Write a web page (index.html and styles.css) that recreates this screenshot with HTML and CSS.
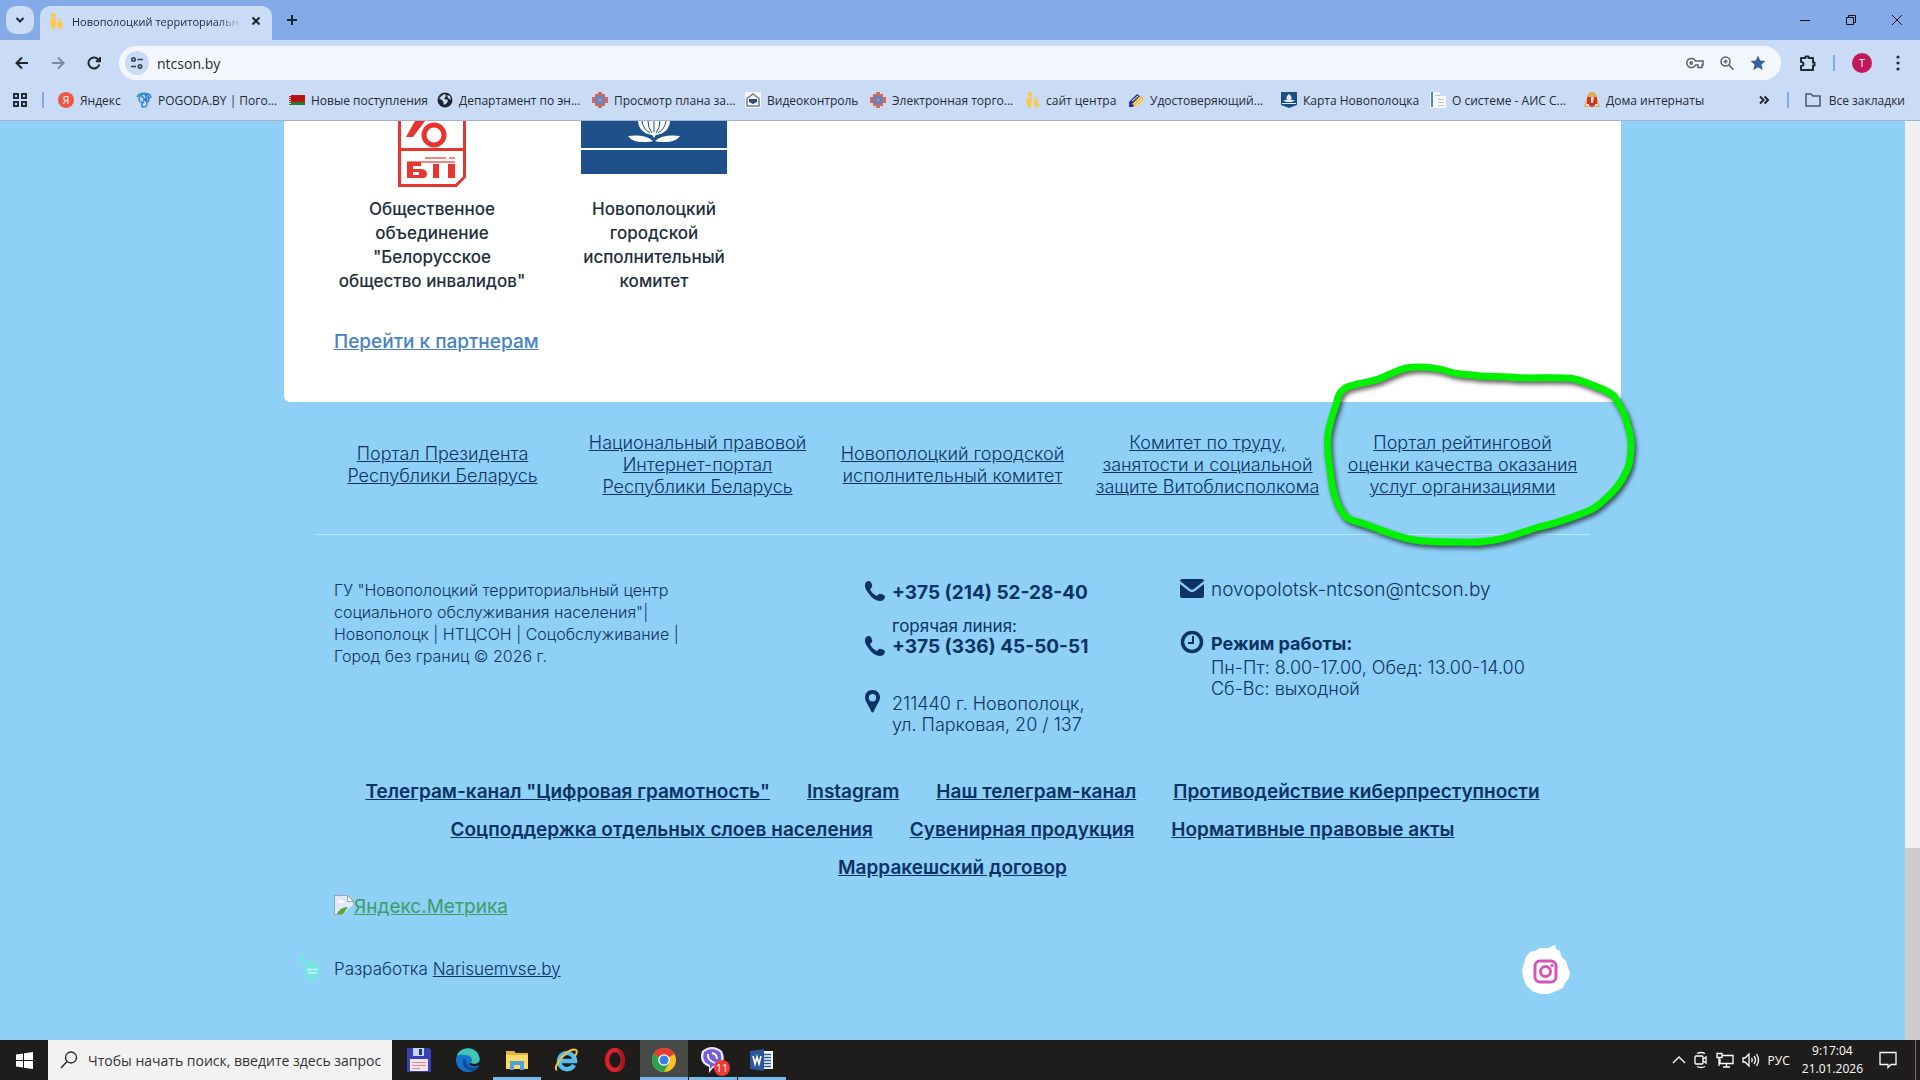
FILE: index.html
```html
<!DOCTYPE html>
<html lang="ru">
<head>
<meta charset="utf-8">
<title>Новополоцкий территориальный центр</title>
<link rel="stylesheet" href="styles.css">
</head>
<body>
<header class="browser">
  <div class="tabstrip">
    <button class="tab-menu" aria-label="Поиск вкладок"><svg width="10" height="8" viewBox="0 0 10 8"><path d="M1.5 2 5 5.500 8.500 2" class="ln"/></svg></button>
    <div class="tab">
      <svg width="14" height="16" viewBox="0 0 14 16"><g fill="#fbc94a"><circle cx="4.500" cy="2.200" r="2.200"/><path d="M2 5h5v5l-1 6H3L1 10z"/><circle cx="10.500" cy="7" r="1.600"/><path d="M8 9h5l1 4-3 3-2-1z"/></g></svg>
      <span class="tab-title">Новополоцкий территориальн</span>
      <button class="plain" aria-label="Закрыть"><svg width="10" height="10" viewBox="0 0 10 10"><path d="m1.500 1.500 7 7m0-7-7 7" class="ln"/></svg></button>
    </div>
    <button class="plain newtab" aria-label="Новая вкладка"><svg width="12" height="12" viewBox="0 0 12 12"><path d="M6 1v10M1 6h10" class="ln"/></svg></button>
    <div class="winctl">
      <button class="plain" aria-label="Свернуть"><svg width="12" height="12" viewBox="0 0 12 12"><path d="M1 6.500h10" stroke="#111"/></svg></button>
      <button class="plain" aria-label="Окно"><svg width="12" height="12" viewBox="0 0 12 12" fill="none" stroke="#111"><path d="M1.500 3.500h7v7h-7zM3.500 3.500v-2h7v7h-2"/></svg></button>
      <button class="plain" aria-label="Закрыть окно"><svg width="12" height="12" viewBox="0 0 12 12"><path d="m1 1 10 10M11 1 1 11" stroke="#111"/></svg></button>
    </div>
  </div>
  <div class="toolbar">
    <button class="plain nav" aria-label="Назад"><svg width="14" height="14" viewBox="0 0 14 14"><path d="M13 7H2m5-5.500L1.500 7 7 12.500" class="ln"/></svg></button>
    <button class="plain nav dim" aria-label="Вперёд"><svg width="14" height="14" viewBox="0 0 14 14"><path d="M1 7h11M7 1.500 12.500 7 7 12.500" class="ln"/></svg></button>
    <button class="plain nav" aria-label="Обновить"><svg width="14" height="14" viewBox="0 0 14 14"><path d="M12.300 8.500A5.500 5.500 0 1 1 11 3.200L13 5M13 1v4.200H8.800" class="ln"/></svg></button>
    <div class="omnibox">
      <span class="site"><svg width="14" height="14" viewBox="0 0 14 14" fill="none" stroke="#333c4a" stroke-width="1.600"><circle cx="3.500" cy="3.500" r="1.700"/><path d="M7.500 3.500H13M1 10.500h5"/><circle cx="10" cy="10.500" r="1.700"/></svg></span>
      <input class="url" aria-label="Адрес" value="ntcson.by">
      <svg width="18" height="12" viewBox="0 0 18 12" fill="none" stroke="#5a616c" stroke-width="1.500"><path d="M9.500 4A4.600 4.600 0 1 0 9.500 8H12v2.500h4V8h1V4z"/><circle cx="5.200" cy="6" r="1.200"/></svg>
      <svg width="14" height="15" viewBox="0 0 14 15" fill="none" stroke="#5a616c" stroke-width="1.500"><circle cx="5.500" cy="5.500" r="4.500"/><path d="m8.800 8.800 4.500 5M3.500 5.500h4M5.500 3.500v4"/></svg>
      <svg width="16" height="16" viewBox="0 0 16 16"><path fill="#35639f" d="m8 .5 2.200 5 5.300.5-4 3.600 1.200 5.400L8 12.200 3.300 15l1.200-5.400-4-3.600 5.300-.5z"/></svg>
    </div>
    <button class="plain" aria-label="Расширения"><svg width="18" height="18" viewBox="0 0 18 18" fill="none" stroke="#222b38" stroke-width="2" stroke-linejoin="round"><path d="M2 4h4.500V2.500h3V4H14v4.500h1.500v3H14V16H2v-4q2.500 0 2.500-2T2 8z"/></svg></button>
    <span class="sep"></span>
    <span class="avatar">T</span>
    <button class="plain" aria-label="Меню"><svg width="4" height="16" viewBox="0 0 4 16" fill="#222b38"><circle cx="2" cy="2" r="1.600"/><circle cx="2" cy="8" r="1.600"/><circle cx="2" cy="14" r="1.600"/></svg></button>
  </div>
  <nav class="bookmarks">
    <button class="plain apps" aria-label="Группы"><svg width="16" height="16" viewBox="0 0 16 16" fill="none" stroke="#222b38" stroke-width="2"><path d="M2 2h4v4H2zM10 2h4v4h-4zM2 10h4v4H2zM10 10h4v4h-4z"/></svg></button>
    <span class="sep"></span>
    <div class="marks">
      <a href="#"><span class="ya">Я</span>Яндекс</a>
      <a href="#"><svg width="16" height="16" viewBox="0 0 16 16" fill="none" stroke="#2f86cf" stroke-width="1.500"><path d="M3 8a5 5 0 1 1 9 2M1 5c3-5 12-5 14 0-3 2-6 1-8 4m-3-7 7 8M9 1l2 9m-3 0c-3 1-3 5 0 5s4-3 2-6M3 8l3 3"/></svg>POGODA.BY | Пого...</a>
      <a href="#"><svg width="16" height="10" viewBox="0 0 16 10"><path fill="#b5130f" d="M0 0h16v7H0z"/><path fill="#287a2d" d="M0 7h16v3H0z"/><path stroke="#f2dada" stroke-width="2" stroke-dasharray="1 1" d="M1 0v10"/></svg>Новые поступления</a>
      <a href="#"><svg width="16" height="16" viewBox="0 0 16 16"><circle cx="8" cy="8" r="7.500" fill="#202630"/><path fill="#cadbf5" d="M2 6c3-1 2-3 6-4l1 2-2 3 4 1-1 3-3 2-1-4zM10 3l3 1 1 4-3-2z"/></svg>Департамент по эн...</a>
      <a href="#"><svg width="16" height="16" viewBox="0 0 16 16"><use href="#flower"/></svg>Просмотр плана за...</a>
      <a href="#"><svg width="16" height="16" viewBox="0 0 16 16"><path fill="#f3f6fb" d="M0 0h16v16H0z"/><path fill="none" stroke="#707e91" stroke-width="1.500" d="M2 6.500 8 2l6 4.500V14H2z"/><path fill="#334b70" d="M4 7h8v3l-4 2-4-2z"/></svg>Видеоконтроль</a>
      <a href="#"><svg width="16" height="16" viewBox="0 0 16 16"><g id="flower"><path fill="#d5685b" d="M6 0h4v2h3v3h3v6h-3v3h-3v2H6v-2H3v-3H0V5h3V2h3z"/><circle cx="8" cy="8" r="4.800" fill="#5d86c4"/><circle cx="8" cy="8" r="1.800" fill="#cf8585"/></g></svg>Электронная торго...</a>
      <a href="#"><svg width="16" height="16" viewBox="0 0 16 16"><g fill="#fbc94a"><circle cx="6" cy="2.200" r="2.200"/><path d="M4 5h4v5l-1 6H5L2 10z"/><circle cx="12" cy="7" r="1.600"/><path d="M10 9h4l1 4-2 3-2-1z"/></g></svg>сайт центра</a>
      <a href="#"><svg width="16" height="16" viewBox="0 0 16 16"><path fill="#26348d" d="m1 10 8-8 4 3-8 10H1z"/><path fill="#f4c24a" d="m4 12 9-9 3 5-8 7z"/><path stroke="#fff" d="m4 9 6-5M8 13l6-6"/></svg>Удостоверяющий...</a>
      <a href="#"><svg width="16" height="16" viewBox="0 0 16 16"><path fill="#1d4f86" d="M0 0h16v13l-8 3-8-3z"/><path fill="#dfe9f5" d="M8 2q4 3 2 6h4l-3 2H5L2 8h4Q4 5 8 2zM1 11h14v1H1z"/></svg>Карта Новополоцка</a>
      <a href="#"><svg width="16" height="16" viewBox="0 0 16 16"><path fill="#f7f9fc" d="M0 0h10v16H0zM6 4h10v12H6z"/><path fill="#3f8fc0" d="M1 0h2v15H1z"/><path stroke="#b8c4cf" d="M5 3.500h5M8 7.500h6M8 10.500h6M8 13.500h6"/></svg>О системе - АИС С...</a>
      <a href="#"><svg width="16" height="16" viewBox="0 0 16 16"><path fill="#d9b04d" d="M4 2l2-2h4l2 2 1 4 3 9H0l3-9z"/><path fill="#d3312e" d="M3 5h10v7l-5 3-5-3z"/><path fill="#f2dfd0" d="M7 5h3l-1 6H7zM2 12h3v2H2zM11 12h3v2h-3z"/></svg>Дома интернаты</a>
    </div>
    <button class="plain" aria-label="Ещё"><svg width="10" height="10" viewBox="0 0 10 10"><path d="m1 1.500 3.500 3.500L1 8.500m4.500-7L9 5 5.500 8.500" class="ln"/></svg></button>
    <span class="sep"></span>
    <a class="all" href="#"><svg width="16" height="14" viewBox="0 0 16 14" fill="none" stroke="#4c5666" stroke-width="1.500"><path d="M1 2.500V13h14V3H8L6 1H1z"/></svg>Все закладки</a>
  </nav>
</header>

<div class="viewport">
  <main class="page">
    <section class="card">
      <div class="partners">
        <figure>
          <svg width="70" height="66" viewBox="0 0 70 66"><g fill="none" stroke="#e8352f"><path stroke-width="3" d="M2.500 0v64.500h56.500l8.500-8.500V0"/><path stroke-width="3" d="M2 28.500h66"/><circle cx="37" cy="14" r="10" stroke-width="5"/></g><g fill="#e8352f"><path d="m9 16 9-16h10L16 16z"/><path d="M10 41h14v4h-8v3h7q7 0 7 5t-7 4H10zM16 51h6v3h-6zM36 43h6v14h-6zM51 43h7v14h-7z" fill-rule="evenodd"/><path opacity=".6" d="M28 36h21v2H28zm24 0h6v2h-6zM10 40h48v2H10z"/></g></svg>
          <figcaption>Общественное объединение "Белорусское общество инвалидов"</figcaption>
        </figure>
        <figure>
          <svg width="146" height="66" viewBox="0 0 146 66"><path fill="#1e5089" d="M0 0h146v27H0zM0 29h146v24H0z"/><path fill="#fff" d="M57 0h32q-1 12-14 14-1 1-2 3-1-2-2-3Q58 12 57 0zM47 15q17-2 25 5-2 1-10 1-11 0-15-6zm52 0q-17-2-25 5 2 1 10 1 11 0 15-6z"/><path fill="none" stroke="#1e5089" d="M61 0q1 8 8 12M67 0q0 7 4 12M79 0q0 7-4 12M85 0q-1 8-8 12M73 0v11"/></svg>
          <figcaption>Новополоцкий городской исполнительный комитет</figcaption>
        </figure>
      </div>
      <a class="more" href="#">Перейти к партнерам</a>
    </section>

    <footer class="footer">
      <ul class="portals">
        <li><a href="#">Портал Президента<br>Республики Беларусь</a></li>
        <li><a href="#">Национальный правовой<br>Интернет-портал<br>Республики Беларусь</a></li>
        <li><a href="#">Новополоцкий городской<br>исполнительный комитет</a></li>
        <li><a href="#">Комитет по труду,<br>занятости и социальной<br>защите Витоблисполкома</a></li>
        <li><a href="#">Портал рейтинговой<br>оценки качества оказания<br>услуг организациями</a>
          <svg class="marker" width="325" height="200" viewBox="1320 360 325 200"><path fill="none" stroke="#00f200" stroke-width="7" stroke-linejoin="round" stroke-linecap="round" d="M1336 405C1338 397 1338 393 1345 388C1354 383 1370 383 1381 378C1390 374 1400 369 1407 368C1418 366 1437 367 1450 372C1459 375 1470 374 1479 376L1509 377C1530 379 1545 377 1565 378C1573 378 1580 380 1587 383C1598 387 1609 391 1614 396C1618 404 1625 412 1627 423C1630 433 1632 441 1631 448C1630 460 1630 464 1626 472C1621 483 1614 492 1604 500C1597 507 1590 511 1583 513C1568 519 1553 524 1539 527C1521 532 1505 540 1487 541C1477 543 1467 542 1457 542C1439 542 1423 542 1409 539C1395 536 1383 531 1370 526C1361 522 1350 521 1346 517C1341 511 1338 506 1336 500C1331 487 1331 475 1329 463C1327 450 1327 444 1328 433C1330 424 1332 415 1336 405Z"/></svg>
        </li>
      </ul>
      <div class="info">
        <p class="about">ГУ "Новополоцкий территориальный центр<br>социального обслуживания населения"|<br>Новополоцк | НТЦСОН | Соцобслуживание |<br>Город без границ © 2026 г.</p>
        <div class="contacts">
          <svg class="ph" viewBox="0 0 20 20"><use href="#phone"/></svg>
          <a class="tel" href="tel:+375214522840">+375 (214) 52-28-40</a>
          <svg class="ph low" viewBox="0 0 20 20"><path id="phone" fill="#0c3364" d="M4 0q2 0 3 4 1 2-2 4 2 5 7 7 2-3 4-2 4 1 4 3-1 4-5 4Q9 20 4 13-1 7 0 3 1 0 4 0z"/></svg>
          <div class="hot"><span>горячая линия:</span><a class="tel" href="tel:+375336455051">+375 (336) 45-50-51</a></div>
          <svg class="ph pin" viewBox="0 0 16 23"><path fill="#0c3364" fill-rule="evenodd" d="M7.500 0C12 0 15 3 15 7.500 15 11 11 16 9 21q-1.500 3-3 0C4 16 0 11 0 7.500 0 3 3 0 7.500 0zm0 4a3.700 3.700 0 1 0 0 7.400 3.700 3.700 0 0 0 0-7.400z"/></svg>
          <address>211440 г. Новополоцк,<br>ул. Парковая, 20 / 137</address>
        </div>
        <div class="schedule">
          <svg width="24" height="20" viewBox="0 0 24 20"><path fill="#0c3364" d="M2 0h20q2 0 2 2L14 10q-2 1.500-4 0L0 2q0-2 2-2zM0 5l9 7q3 2 6 0l9-7v12q0 2-2 2H2q-2 0-2-2z"/></svg>
          <a class="mail" href="mailto:novopolotsk-ntcson@ntcson.by">novopolotsk-ntcson@ntcson.by</a>
          <svg width="24" height="24" viewBox="0 0 24 24" fill="none" stroke="#0c3364"><circle cx="12" cy="12" r="9.500" stroke-width="3.500"/><path stroke-width="2" d="M13 6v7H8"/></svg>
          <p><strong>Режим работы:</strong>Пн-Пт: 8.00-17.00, Обед: 13.00-14.00<br>Сб-Вс: выходной</p>
        </div>
      </div>
      <nav class="links">
        <div><a href="#">Телеграм-канал "Цифровая грамотность"</a><a href="#">Instagram</a><a href="#">Наш телеграм-канал</a><a href="#">Противодействие киберпреступности</a></div>
        <div><a href="#">Соцподдержка отдельных слоев населения</a><a href="#">Сувенирная продукция</a><a href="#">Нормативные правовые акты</a></div>
        <div><a href="#">Марракешский договор</a></div>
      </nav>
      <a class="metrika" href="#"><svg width="20" height="20" viewBox="0 0 20 20"><path fill="#dde8f8" stroke="#9da3a8" d="M.5.500h13l6 6v13H.5z"/><path fill="#fff" d="M3 8q1-4 4-3 3 0 3 3z"/><path fill="#54a63c" d="M3 19q3-7 11-7l-5 7z"/><path fill="#8ed0f6" d="m20 9-12 11h12z"/><path fill="#fff" stroke="#9da3a8" d="M13.500.500v6h6z"/></svg>Яндекс.Метрика</a>
      <div class="credits">
        <svg class="nv" width="22" height="30" viewBox="0 0 22 30"><g fill="#78e3e2"><ellipse cx="13" cy="17" rx="8" ry="10"/><circle cx="3" cy="5" r="3"/><path d="m3 3 8 6-3 4z"/></g><path stroke="#b5f2f2" stroke-width="2" d="M8 15.500h11M9 19h9"/></svg>
        <span>Разработка <a href="#">Narisuemvse.by</a></span>
        <a class="insta" href="#" aria-label="Instagram"><svg width="48" height="50" viewBox="0 0 48 50"><path fill="#fff" d="m4 13 4-5 5-1 5-3 8 0 7-3 1 4 4 2 1 5 5 5 2 7 2 4-1 6-4 5-2 5-7 3-7 3-9 0-8-3-6-6-3-8-1-7 2-7z"/><g fill="none" stroke="#d355b5" stroke-width="3"><rect x="13" y="17" width="21" height="21" rx="5"/><circle cx="23.500" cy="27.500" r="5"/></g><circle cx="30" cy="21.500" r="1.600" fill="#d355b5"/></svg></a>
      </div>
    </footer>
  </main>
  <div class="scroll"><span class="thumb"></span></div>
</div>

<div class="taskbar">
  <button class="plain start" aria-label="Пуск"><svg width="17" height="17" viewBox="0 0 17 17" fill="#fff"><path d="M0 2.500 7 1.500V8H0zM8 1.300 17 0v8H8zM0 9h7v6.500l-7-1zM8 9h9v8l-9-1.300z"/></svg></button>
  <label class="search"><svg width="18" height="18" viewBox="0 0 18 18" fill="none" stroke="#222" stroke-width="1.300"><circle cx="11" cy="6.500" r="5.500"/><path d="M7 10.500 1 17"/></svg><input aria-label="Поиск" placeholder="Чтобы начать поиск, введите здесь запрос"></label>
  <div class="apps-row">
    <button aria-label="Total Commander"><svg width="24" height="24" viewBox="0 0 24 24"><path fill="#3541b6" d="M0 0h22l2 2v22H0z"/><path fill="#c9d4ea" d="M6 0h11v8H6z"/><path fill="#27337f" d="M12 1h3v6h-3z"/><path fill="#f8e3e8" d="M3 11h18v12H3z"/><path stroke="#d48f9d" d="M5 14.500h14M5 17.500h14M5 20.500h8"/></svg></button>
    <button aria-label="Edge"><svg width="24" height="24" viewBox="0 0 24 24"><circle cx="12" cy="12" r="12" fill="#1473c8"/><path fill="#3fc6b0" d="M1 8C3-1 20-3 23 9c2 6-4 8-8 6 3-5-2-8-6-8-4-.5-7 0-8 1z"/><path fill="#0d4c98" d="M8 10c-3 6 1 13 9 13 4-1 5-3 6-5-6 3-13 1-13-5z"/><path fill="#1e1e1c" d="M15 15c3 2 7 1 9-2v3c-3 3-8 3-11 0z"/></svg></button>
    <button class="open" aria-label="Проводник"><svg width="22" height="20" viewBox="0 0 22 20"><path fill="#e8b53c" d="M0 1h8l2 2h12v16H0z"/><path fill="#ffd869" d="M0 5h22v14H0z"/><path fill="#4aa5d8" d="M4 11h14v9h-4v-5H8v5H4z"/></svg></button>
    <button aria-label="Internet Explorer"><svg width="24" height="24" viewBox="0 0 24 24" fill="none"><path stroke="#55bdee" stroke-width="4.500" d="M20 17a8 8 0 1 1 1-4H6"/><path stroke="#f2c53d" stroke-width="2" d="M3 22C-3 20 15-2 22 2q2 2-1 6"/></svg></button>
    <button aria-label="Opera"><svg width="24" height="24" viewBox="0 0 24 24"><ellipse cx="12" cy="12" rx="8" ry="10" fill="none" stroke="#d9202b" stroke-width="4.500"/><path fill="#8f0f18" d="M14 1c9 2 13 17 0 22 6-6 6-16 0-22z" opacity=".6"/></svg></button>
    <button class="open active" aria-label="Chrome"><svg width="24" height="24" viewBox="0 0 24 24"><circle cx="12" cy="12" r="12" fill="#fcc31e"/><path fill="#e33b2e" d="M12 12 1.600 6A12 12 0 0 1 22.400 6z"/><path fill="#2da24c" d="M12 12 1.600 6A12 12 0 0 0 12 24l5-9z"/><circle cx="12" cy="12" r="5.800" fill="#fff"/><circle cx="12" cy="12" r="4.500" fill="#3b7ded"/></svg></button>
    <button class="open" aria-label="Viber"><svg width="26" height="26" viewBox="0 0 26 26"><path fill="#eee8fb" d="M2 4q10-8 20 0 4 9-1 15l-8 2-4 5v-6Q-2 16 2 4z"/><path fill="#7460dc" d="M4 5q8-6 16 0 3 7-1 12l-6 2-3 3v-4Q1 15 4 5z"/><path fill="none" stroke="#fff" stroke-width="1.800" d="M8 7q-1 6 7 9M12 6q5 1 5 6"/></svg><span class="badge">11</span></button>
    <button class="open" aria-label="Word"><svg width="24" height="22" viewBox="0 0 24 22"><path fill="#fff" d="M12 2h11v18H12z"/><path stroke="#2b579a" stroke-width="1.500" d="M13 5.500h8M13 8.500h8M13 11.500h8M13 14.500h8M13 17.500h8"/><path fill="#2b579a" d="m0 2 14-2v22L0 20z"/><path fill="none" stroke="#fff" stroke-width="1.600" d="m3 7 2 8 2-7 2 7 2-8"/></svg></button>
  </div>
  <div class="tray">
    <svg width="14" height="8" viewBox="0 0 14 8"><path d="m1 7 6-6 6 6"/></svg>
    <svg width="14" height="18" viewBox="0 0 14 18"><rect x="1" y="5" width="8" height="8" rx="1"/><path d="m9 8 3-2v6l-3-2M3 2.500q4-2 8 0M3 15.500q4 2 8 0"/></svg>
    <svg width="18" height="16" viewBox="0 0 18 16"><path d="M6 3.500h11v8H4V7M1 1.500h5v4H1zM3 5v9M10.500 12v3M7 15h7"/></svg>
    <svg width="18" height="14" viewBox="0 0 18 14"><path d="M1 5h2l4-4v12L3 9H1zM9.500 5q1.500 2 0 4M12 3q3 4 0 8M14.500 1q4 6 0 12"/></svg>
    <span class="lang">РУС</span>
    <span class="clock">9:17:04<br>21.01.2026</span>
    <svg width="18" height="18" viewBox="0 0 18 18"><path d="M1 1.500h16v12h-5l-3 3v-3H1z"/></svg>
    <span class="edge"></span>
  </div>
</div>
</body>
</html>
```
FILE: styles.css
```css
* { box-sizing: border-box; }
body { margin: 0; min-height: 100vh; display: flex; flex-direction: column; font-family: "Open Sans", sans-serif; font-size: 12px; color: #222b38; }
svg { flex: none; display: block; }
.ln { fill: none; stroke: #1f2733; stroke-width: 2; }
.plain { border: 0; background: none; padding: 0; display: flex; align-items: center; justify-content: center; }
a { color: inherit; }

.browser { background: #cadbf5; border-bottom: 1px solid #9eb2d0; }
.tabstrip { height: 40px; background: #84aae8; display: flex; align-items: flex-end; padding-left: 6px; }
.tab-menu { width: 28px; height: 28px; margin: 0 6px 6px 0; border: 0; border-radius: 10px; background: #cadbf5; display: flex; align-items: center; justify-content: center; }
.tab { width: 232px; height: 34px; border-radius: 10px 10px 0 0; background: #cadbf5; display: flex; align-items: center; gap: 9px; padding: 0 11px 4px 9px; }
.tab-title { flex: 1; white-space: nowrap; font-size: 11px; mask-image: linear-gradient(90deg, #000 85%, transparent); }
.newtab { margin: 0 0 14px 14px; }
.winctl { margin-left: auto; display: flex; gap: 34px; padding: 0 17px 14px 0; }
.toolbar { height: 46px; display: flex; align-items: center; padding: 0 20px 0 15px; gap: 17px; }
.nav { width: 14px; margin-right: 5px; }
.dim { opacity: .45; }
.omnibox { flex: 1; height: 34px; border-radius: 17px; background: #f3f7fd; display: flex; align-items: center; gap: 16px; padding: 0 15px 0 6px; }
.nav + .omnibox { margin-left: -4px; }
.site { width: 24px; height: 24px; border-radius: 50%; background: #cadbf5; display: flex; align-items: center; justify-content: center; }
.url { flex: 1; border: 0; background: none; padding: 0; margin-left: -8px; font: 14px "Open Sans", sans-serif; color: #222b38; }
.omnibox + .plain { margin: 0 -1px 0 1px; }
.sep { width: 2px; height: 16px; background: #84aae8; }
.avatar { width: 20px; height: 20px; margin-right: 7px; border-radius: 50%; background: #c2185b; color: #fff; font-size: 11px; line-height: 20px; text-align: center; }
.bookmarks { height: 34px; display: flex; align-items: center; padding: 0 15px 6px 12px; }
.bookmarks a { display: flex; align-items: center; gap: 6px; text-decoration: none; white-space: nowrap; }
.apps { margin-right: 14px; }
.marks { flex: 1; display: grid; grid-template-columns: 78px 153px 148px 155px 153px 125px 154px 104px 153px 149px 154px auto; padding-left: 14px; }
.ya { width: 16px; height: 16px; border-radius: 50%; background: #ef5647; color: #fff; font-size: 11px; line-height: 16px; text-align: center; }
.bookmarks .all { gap: 8px; margin-left: 16px; }
.marks + .plain { margin-right: 18px; }

.viewport { flex: 1; display: flex; background: #8ed0f6; }
.page { flex: 1; max-width: 1337px; margin: 0 auto; font-family: Inter, sans-serif; color: #0c3364; }
.scroll { width: 15px; background: #f0f0f0; display: flex; align-items: flex-end; }
.thumb { width: 15px; height: 192px; background: #cdcdcd; }
.card { background: #fff; border-radius: 0 0 6px 6px; padding: 0 50px 48px; color: #212e3c; }
.partners { display: flex; gap: 26px; }
figure { margin: 0; width: 196px; display: flex; flex-direction: column; align-items: center; gap: 10px; }
figcaption { font-size: 17px; line-height: 24px; font-weight: 500; text-align: center; }
.more { display: inline-block; margin-top: 37px; font-size: 19px; line-height: 24px; font-weight: 500; color: #4682c6; }
.footer { padding: 30px 31px 0; }
.portals { list-style: none; margin: 0; padding: 0 0 36px; display: grid; grid-template-columns: repeat(5, 1fr); border-bottom: 1px solid #b9e6fa; }
.portals li { position: relative; display: flex; align-items: center; justify-content: center; text-align: center; white-space: nowrap; font-size: 18px; line-height: 22px; font-weight: 300; }
.marker { position: absolute; left: -15px; top: -72px; filter: drop-shadow(2px 3px 2px rgba(0, 0, 0, .6)); pointer-events: none; }
.info { display: grid; grid-template-columns: 531px 315px 1fr; padding: 44px 0 0 19px; }
.about { margin: 0; font-size: 16px; line-height: 22px; font-weight: 300; }
.contacts, .schedule { display: grid; grid-template-columns: 27px 1fr; align-content: start; }
.schedule { grid-template-columns: 31px 1fr; white-space: nowrap; }
.ph { width: 20px; height: 20px; margin-top: 2px; }
.tel { font-size: 19px; line-height: 28px; font-weight: 700; text-decoration: none; white-space: nowrap; }
.hot { display: flex; flex-direction: column; margin: 9px 0 32px; font-size: 17px; line-height: 20px; }
.hot .tel { line-height: 22px; }
.low { margin-top: 29px; }
.pin { width: 16px; height: 23px; margin-top: 0; }
address { font-style: normal; font-size: 18px; line-height: 21px; font-weight: 300; white-space: nowrap; padding-top: 3px; }
.mail { font-size: 19px; line-height: 22px; font-weight: 300; text-decoration: none; margin-bottom: 29px; }
.schedule p { margin: 0; font-size: 18px; line-height: 21px; font-weight: 300; }
.schedule strong { display: block; font-weight: 700; line-height: 27px; }
.links { display: flex; flex-direction: column; gap: 16px; padding-top: 46px; font-size: 19px; line-height: 22px; font-weight: 600; }
.links div { display: flex; justify-content: center; gap: 37px; white-space: nowrap; }
.metrika { display: flex; width: max-content; margin: 16px 0 0 19px; font-size: 19px; line-height: 24px; color: #3c9e66; }
.credits { display: flex; align-items: center; margin: 25px 20px 0 -16px; font-size: 17px; font-weight: 300; }
.nv { margin-right: 13px; }
.insta { margin-left: auto; }

.taskbar { height: 40px; background: #1f1d1b; display: flex; align-items: stretch; color: #fff; }
.start { width: 48px; }
.search { width: 344px; background: #f2f2f2; display: flex; align-items: center; gap: 10px; padding: 0 4px 0 12px; }
.search input { flex: 1; min-width: 0; border: 0; background: none; padding: 0; font: 14px "Open Sans", sans-serif; }
.search input::placeholder { color: #333; }
.apps-row { display: flex; gap: 1px; padding-left: 3px; }
.apps-row button { position: relative; width: 48px; border: 0; border-bottom: 3px solid transparent; background: none; padding: 3px 0 0; display: flex; align-items: center; justify-content: center; }
.apps-row .open { border-bottom-color: #76b9ed; background-clip: padding-box; }
.apps-row .active { background-color: #474a47; }
.badge { position: absolute; right: 7px; bottom: 1px; width: 16px; height: 16px; border-radius: 50%; background: #ee3b35; color: #fff; font: 11px/16px "Open Sans", sans-serif; }
.tray { margin-left: auto; display: flex; align-items: center; gap: 8px; }
.tray path, .tray rect { fill: none; stroke: #fff; stroke-width: 1.3; }
.tray .clock { line-height: 18px; text-align: center; margin: 0 8px 0 4px; }
.edge { width: 1px; height: 40px; background: #77736f; margin: 0 4px 0 10px; }
```
